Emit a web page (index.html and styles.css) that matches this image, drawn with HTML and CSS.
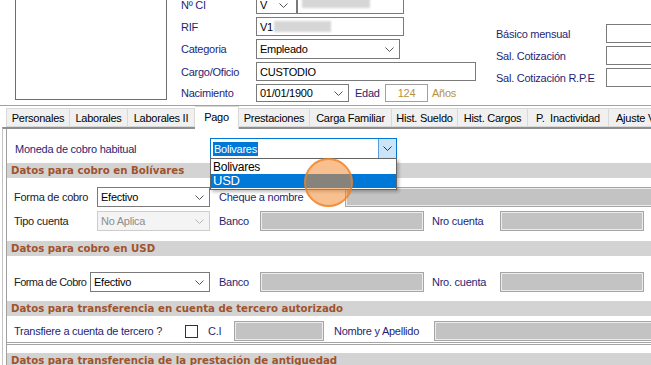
FILE: index.html
```html
<!DOCTYPE html>
<html lang="es">
<head>
<meta charset="UTF-8">
<title>Ficha del trabajador - Pago</title>
<link rel="stylesheet" href="styles.css">
</head>
<body>

<div class="header">
    <div class="photo"></div>

    <div class="ident">
        <span class="lbl">Nº CI</span>
        <div class="field">
            <div class="combo w-cisel">V<svg width="9" height="5" viewBox="0 0 9 5"><path d="M0.5 0.5L4.5 4.5L8.5 0.5" fill="none" stroke="#555"/></svg></div>
            <div class="box w-cinum"><span class="blur blur-ci"></span></div>
        </div>

        <span class="lbl">RIF</span>
        <div class="field"><div class="box w-rif">V1<span class="blur blur-rif"></span></div></div>

        <span class="lbl">Categoria</span>
        <div class="field">
            <div class="combo w-cat">Empleado<svg width="9" height="5" viewBox="0 0 9 5"><path d="M0.5 0.5L4.5 4.5L8.5 0.5" fill="none" stroke="#555"/></svg></div>
        </div>

        <span class="lbl">Cargo/Oficio</span>
        <div class="field"><div class="box w-cargo">CUSTODIO</div></div>

        <span class="lbl">Nacimiento</span>
        <div class="field">
            <div class="combo w-nac">01/01/1900<svg width="9" height="5" viewBox="0 0 9 5"><path d="M0.5 0.5L4.5 4.5L8.5 0.5" fill="none" stroke="#555"/></svg></div>
            <span class="lbl edad">Edad</span>
            <div class="box w-edad">124</div>
            <span class="anios">Años</span>
        </div>
    </div>

    <div class="salary">
        <span class="lbl">Básico mensual</span>
        <div class="box w-sal"></div>
        <span class="lbl">Sal. Cotización</span>
        <div class="box w-sal"></div>
        <span class="lbl">Sal. Cotización R.P.E</span>
        <div class="box w-sal"></div>
    </div>
</div>

<div class="tabs">
    <div class="tab">Personales</div>
    <div class="tab">Laborales</div>
    <div class="tab">Laborales II</div>
    <div class="tab active">Pago</div>
    <div class="tab">Prestaciones</div>
    <div class="tab">Carga Familiar</div>
    <div class="tab">Hist. Sueldo</div>
    <div class="tab">Hist. Cargos</div>
    <div class="tab">P.&nbsp; Inactividad</div>
    <div class="tab">Ajuste Viaticos</div>
</div>

<div class="panel">
    <div class="page">

        <div class="moneda">
            <span class="lbl w-moneda">Moneda de cobro habitual</span>
            <div class="combo focus w-monedabox">
                <span class="selected">Bolivares</span>
                <span class="drop-btn"><svg width="9" height="5" viewBox="0 0 9 5"><path d="M0.5 0.5L4.5 4.5L8.5 0.5" fill="none" stroke="#333"/></svg></span>
            </div>
        </div>

        <!-- Bolivares -->
        <div class="title">Datos para cobro en Bolívares</div>
        <div class="row gap-title">
            <span class="lbl dark w-forma">Forma de cobro</span>
            <div class="combo w-sel">Efectivo<svg width="9" height="5" viewBox="0 0 9 5"><path d="M0.5 0.5L4.5 4.5L8.5 0.5" fill="none" stroke="#555"/></svg></div>
            <span class="lbl w-cheque">Cheque a nombre</span>
            <div class="box off w-rest"></div>
        </div>
        <div class="row gap-row">
            <span class="lbl dark w-forma">Tipo cuenta</span>
            <div class="combo disabled w-sel">No Aplica<svg width="9" height="5" viewBox="0 0 9 5"><path d="M0.5 0.5L4.5 4.5L8.5 0.5" fill="none" stroke="#b5b5b5"/></svg></div>
            <span class="lbl w-banco">Banco</span>
            <div class="box off w-bancobox"></div>
            <span class="lbl w-nro">Nro cuenta</span>
            <div class="box off w-nrobox"></div>
        </div>

        <!-- USD -->
        <div class="title title-usd">Datos para cobro en USD</div>
        <div class="row gap-usd">
            <span class="lbl dark w-forma-usd">Forma de Cobro</span>
            <div class="combo w-sel-usd">Efectivo<svg width="9" height="5" viewBox="0 0 9 5"><path d="M0.5 0.5L4.5 4.5L8.5 0.5" fill="none" stroke="#555"/></svg></div>
            <span class="lbl w-banco">Banco</span>
            <div class="box off w-bancobox"></div>
            <span class="lbl w-nro">Nro. cuenta</span>
            <div class="box off w-nrobox"></div>
        </div>

        <!-- Tercero -->
        <div class="title title-tercero">Datos para transferencia en cuenta de tercero autorizado</div>
        <div class="row gap-tercero">
            <span class="lbl w-transf">Transfiere a cuenta de tercero ?</span>
            <span class="check"></span>
            <span class="lbl w-ci">C.I</span>
            <div class="box off w-cibox"></div>
            <span class="lbl w-nombre">Nombre y Apellido</span>
            <div class="box off w-rest"></div>
        </div>

        <div class="group-last">
            <div class="title">Datos para transferencia de la prestación de antiguedad</div>
        </div>
    </div>
</div>

<!-- open dropdown list of the combo -->
<div class="dropdown">
    <div class="item">Bolivares</div>
    <div class="item hover">USD</div>
</div>

<!-- click highlight -->
<div class="click-mark"></div>

</body>
</html>
```

FILE: styles.css
```css
* { box-sizing: border-box; }

body {
    margin: 0;
    width: 651px;
    height: 365px;
    overflow: hidden;
    position: relative;
    background: #fff;
    color: #000;
    font-family: "Liberation Sans", Arial, sans-serif;
    font-size: 11px;
    letter-spacing: -0.25px;
}

.lbl {
    display: flex;
    align-items: center;
    flex: none;
    color: #1f1f75;
    white-space: nowrap;
}
.lbl.dark { color: #222; }

.box {
    display: flex;
    align-items: center;
    flex: none;
    height: 100%;
    padding: 0 3px;
    background: #fff;
    border: 1px solid #7a7a7a;
    white-space: nowrap;
}
.box.off {
    background: #c3c3c3;
    border-color: #a5a5a5;
    box-shadow: inset 0 0 0 1px #ececec;
}

.combo {
    display: flex;
    align-items: center;
    justify-content: space-between;
    flex: none;
    height: 100%;
    padding: 0 5px 0 3px;
    background: #fff;
    border: 1px solid #7a7a7a;
}
.combo.disabled {
    color: #8d8d8d;
    background: #f4f4f4;
    border-color: #cdcdcd;
}
.combo.focus {
    padding: 0 0 0 2px;
    border-color: #0078d7;
}

.blur {
    display: inline-block;
    background: #d6d6d6;
    filter: blur(1px);
}

/* ---- top header ---- */
.header {
    display: flex;
    height: 106px;
    border-bottom: 1px solid #a0a0a0;
}
.photo {
    flex: none;
    width: 152px;
    height: 100px;
    margin-left: 15px;
    border: 1px solid #6d6d6d;
    border-top: none;
}
.ident {
    flex: none;
    display: grid;
    grid-template-columns: 75px auto;
    grid-template-rows: 18px 19px 20px 19px 18px;
    row-gap: 3px;
    align-content: start;
    margin: -4px 0 0 14px;
}
.field {
    display: flex;
    height: 100%;
}
.w-cisel { width: 41px; padding-right: 8px; }
.w-cinum { width: 107px; }
.blur-ci { width: 68px; height: 10px; margin: -4px 0 0 1px; }
.w-rif { width: 148px; }
.blur-rif { width: 57px; height: 11px; margin-left: 1px; }
.w-cat { width: 144px; }
.w-cargo { width: 220px; }
.w-nac { width: 93px; }
.edad { width: 36px; padding-left: 6px; }
.w-edad {
    width: 43px;
    justify-content: center;
    color: #b8913e;
    border-color: #a0a0a0;
}
.anios {
    display: flex;
    align-items: center;
    padding-left: 4px;
    color: #b8913e;
}

.salary {
    flex: none;
    display: grid;
    grid-template-columns: 110px 60px;
    grid-template-rows: repeat(3, 19px);
    row-gap: 3px;
    align-content: start;
    margin: 24px 0 0 20px;
}
.w-sal { width: 60px; }

/* ---- tabs ---- */
.tabs {
    display: flex;
    align-items: flex-end;
    height: 21px;
    padding-left: 6px;
}
.tab {
    display: flex;
    align-items: center;
    justify-content: center;
    flex: none;
    height: 19px;
    background: #f0f0f0;
    border: 1px solid #d9d9d9;
    border-left: none;
    white-space: nowrap;
}
.tab:nth-child(1) { width: 64px; border-left: 1px solid #d9d9d9; }
.tab:nth-child(2) { width: 58px; }
.tab:nth-child(3) { width: 67px; }
.tab:nth-child(4) { width: 44px; }
.tab:nth-child(5) { width: 71px; }
.tab:nth-child(6) { width: 82px; }
.tab:nth-child(7) { width: 66px; }
.tab:nth-child(8) { width: 70px; }
.tab:nth-child(9) { width: 81px; }
.tab:nth-child(10) { width: 80px; justify-content: flex-start; padding-left: 7px; }
.tab.active {
    position: relative;
    z-index: 1;
    height: 23px;
    margin-bottom: -2px;
    padding-bottom: 3px;
    background: #fff;
    border-bottom: none;
}

/* ---- page ---- */
.panel {
    height: 238px;
    margin-left: 2px;
    border-top: 2px solid #8f8f8f;
    border-left: 1px solid #c4c4c4;
}
.page {
    height: 100%;
    margin-left: 3px;
    padding-top: 9px;
    border-left: 1px solid #a0a0a0;
}

.moneda {
    display: flex;
    height: 21px;
    padding-left: 8px;
}
.w-moneda { width: 195px; }
.w-monedabox { width: 187px; }
.selected {
    padding: 1px 1px;
    color: #fff;
    background: #0078d7;
}
.drop-btn {
    display: flex;
    align-items: center;
    justify-content: center;
    width: 18px;
    height: 100%;
    background: #cce4f7;
    border-left: 1px solid #569de5;
}

.title {
    display: flex;
    align-items: center;
    height: 15px;
    margin-top: 4px;
    padding-left: 4px;
    background: #d3d3d3;
    color: #a0522d;
    font-family: "DejaVu Sans", Verdana, sans-serif;
    font-size: 10.2px;
    font-weight: bold;
    letter-spacing: 0;
    white-space: nowrap;
}
.title-usd { margin-top: 10px; }
.title-tercero { margin-top: 9px; }

.row {
    display: flex;
    align-items: center;
    height: 20px;
    padding-left: 7px;
}
.gap-title { margin-top: 9px; }
.gap-row { margin-top: 4px; }
.gap-usd { margin-top: 16px; }
.gap-tercero { margin-top: 5px; }

.w-forma { width: 83px; }
.w-sel { width: 113px; }
.w-forma-usd { width: 76px; letter-spacing: -0.55px; }
.w-sel-usd { width: 120px; }
.w-cheque { width: 126px; margin-left: 9px; }
.w-rest { width: 320px; }
.w-banco { width: 41px; margin-left: 9px; }
.w-bancobox { width: 164px; }
.w-nro { width: 68px; margin-left: 8px; }
.w-nrobox { width: 144px; }
.w-transf { width: 171px; }
.w-ci { width: 26px; margin-left: 10px; }
.w-cibox { width: 90px; }
.w-nombre { width: 100px; margin-left: 10px; }

.check {
    flex: none;
    width: 13px;
    height: 13px;
    background: #fff;
    border: 1px solid #333;
}

.group-last {
    margin-top: 1px;
    padding-top: 4px;
    border-top: 3px double #a5a5a5;
}

/* ---- overlays ---- */
.dropdown {
    position: absolute;
    left: 210px;
    top: 158px;
    width: 187px;
    padding: 1px 0;
    background: #fff;
    border: 1px solid #646464;
    box-shadow: 2px 2px 3px rgba(0, 0, 0, 0.25);
    font-size: 12px;
}
.item {
    height: 14px;
    padding-left: 2px;
    line-height: 14px;
}
.item.hover {
    color: #fff;
    background: #0078d7;
    font-size: 13px;
}

.click-mark {
    position: absolute;
    left: 304px;
    top: 158px;
    width: 49px;
    height: 49px;
    border-radius: 50%;
    background: rgba(243, 140, 50, 0.55);
    border: 2px solid rgba(235, 130, 40, 0.75);
}
```
